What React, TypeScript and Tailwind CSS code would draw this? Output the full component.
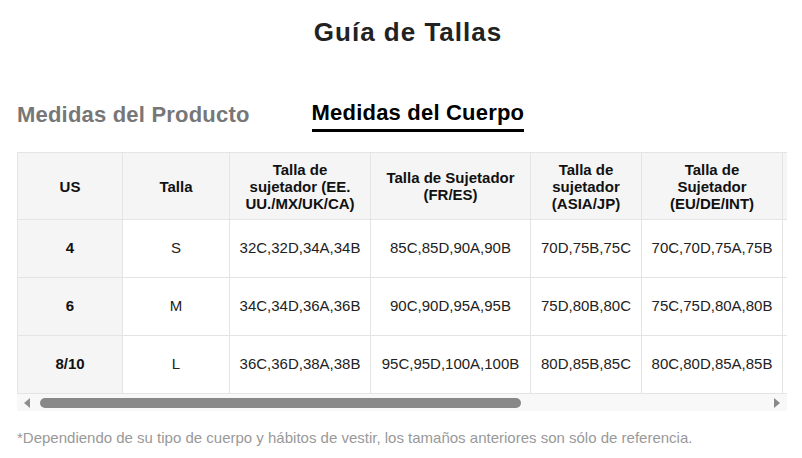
import { Fragment } from 'react'

const headers = [
  'US',
  'Talla',
  'Talla de sujetador (EE. UU./MX/UK/CA)',
  'Talla de Sujetador (FR/ES)',
  'Talla de sujetador (ASIA/JP)',
  'Talla de Sujetador (EU/DE/INT)',
  '',
]

const rows = [
  ['4', 'S', '32C,32D,34A,34B', '85C,85D,90A,90B', '70D,75B,75C', '70C,70D,75A,75B', ''],
  ['6', 'M', '34C,34D,36A,36B', '90C,90D,95A,95B', '75D,80B,80C', '75C,75D,80A,80B', ''],
  ['8/10', 'L', '36C,36D,38A,38B', '95C,95D,100A,100B', '80D,85B,85C', '80C,80D,85A,85B', ''],
]

export default function App() {
  return (
    <div className="min-h-[458px] bg-white px-[17px] text-[#222] [font-family:'Liberation_Sans',Arial,sans-serif]">
      <h1 className="pt-[18px] pl-[14px] text-center text-[26px] leading-[29px] font-bold tracking-[1px] text-[#222]">
        Guía de Tallas
      </h1>

      <div className="mt-[53px] flex gap-[62px]">
        <button className="pb-[3px] text-[22px] leading-[26px] font-bold tracking-[0.2px] text-[#777]">
          Medidas del Producto
        </button>
        <button className="border-b-[3px] border-black pb-[3px] text-[22px] leading-[26px] font-bold tracking-[0.2px] text-black">
          Medidas del Cuerpo
        </button>
      </div>

      <div className="mt-[20px] w-[770px] overflow-hidden">
        <div className="grid w-max grid-cols-[105px_107px_141px_160px_111px_141px_141px] border-t border-l border-[#e4e4e4] text-[15px]">
          {headers.map((h, i) => (
            <div
              key={i}
              className="flex h-[67px] items-center justify-center border-r border-b border-[#e4e4e4] bg-[#f5f5f5] px-3 text-center leading-[17px] font-bold text-[#111]"
            >
              {h}
            </div>
          ))}
          {rows.map((row) => (
            <Fragment key={row[0]}>
              {row.map((cell, i) => (
                <div
                  key={i}
                  className={
                    i === 0
                      ? 'flex h-[58px] items-center justify-center border-r border-b border-[#e4e4e4] bg-[#f5f5f5] px-3 font-bold text-[#111]'
                      : 'flex h-[58px] items-center justify-center border-r border-b border-[#e4e4e4] bg-white px-3 whitespace-nowrap text-[#222]'
                  }
                >
                  {cell}
                </div>
              ))}
            </Fragment>
          ))}
        </div>

        {/* scrollbar */}
        <div className="flex h-[17px] items-center bg-[#f8f8f8] px-[6px]">
          <svg width="7" height="10" viewBox="0 0 7 10" className="shrink-0">
            <path d="M7 0 L1 5 L7 10 Z" fill="#8f8f8f" />
          </svg>
          <div className="ml-[10px] h-[10px] w-[481px] rounded-full bg-[#888]" />
          <div className="flex-1" />
          <svg width="7" height="10" viewBox="0 0 7 10" className="shrink-0">
            <path d="M0 0 L6 5 L0 10 Z" fill="#888" />
          </svg>
        </div>
      </div>

      <p className="mt-[18px] text-[15px] leading-[17px] text-[#999]">
        *Dependiendo de su tipo de cuerpo y hábitos de vestir, los tamaños anteriores son sólo de referencia.
      </p>
    </div>
  )
}
